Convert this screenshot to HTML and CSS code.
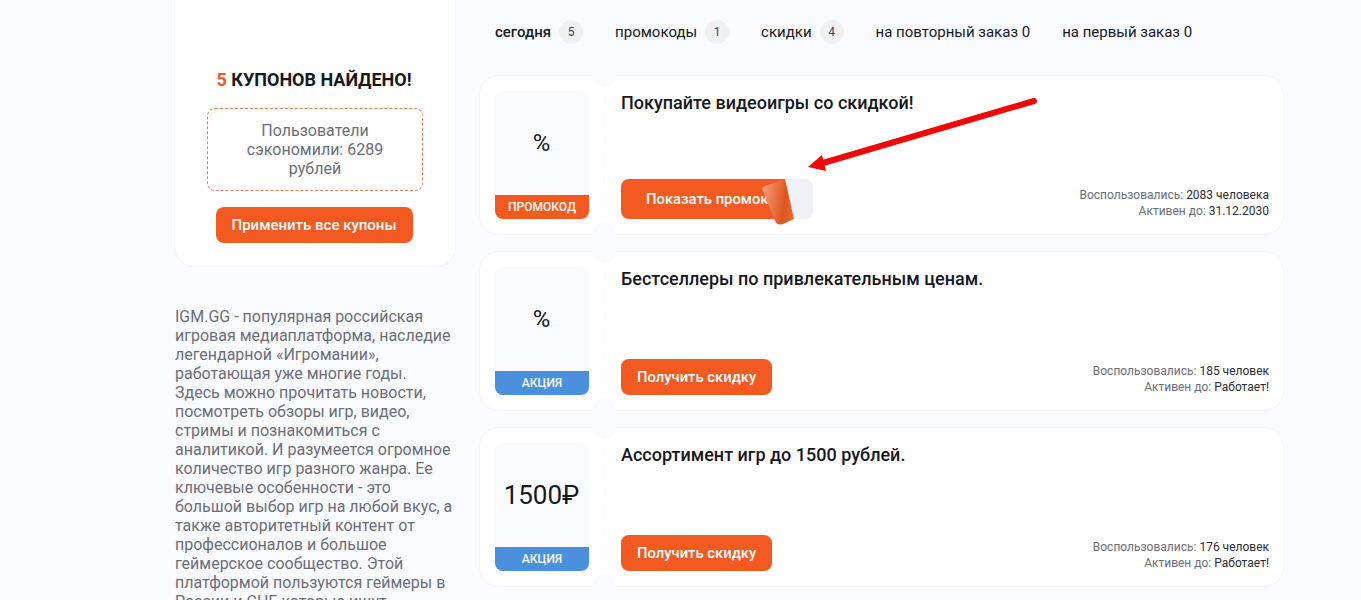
FILE: index.html
```html
<!DOCTYPE html>
<html lang="ru">
<head>
  <meta charset="UTF-8" />
  <title>Промокоды IGM.GG</title>
  <link rel="stylesheet" href="styles.css">
</head>
<body>

<div class="page">
  <aside class="sidebar">
    <div class="summary">
      <h2 class="summary-title"><span>5</span> купонов найдено!</h2>
      <div class="summary-saved">Пользователи сэкономили: 6289 рублей</div>
      <button class="btn btn-apply">Применить все купоны</button>
    </div>
    <p class="about">IGM.GG - популярная российская игровая медиаплатформа, наследие легендарной «Игромании», работающая уже многие годы. Здесь можно прочитать новости, посмотреть обзоры игр, видео, стримы и познакомиться с аналитикой. И разумеется огромное количество игр разного жанра. Ее ключевые особенности - это большой выбор игр на любой вкус, а также авторитетный контент от профессионалов и большое геймерское сообщество. Этой платформой пользуются геймеры в России и СНГ которые ищут актуальную информацию об играх.</p>
  </aside>

  <main class="content">
    <nav class="tabs">
      <a class="tab active">сегодня <span class="count">5</span></a>
      <a class="tab">промокоды <span class="count">1</span></a>
      <a class="tab">скидки <span class="count">4</span></a>
      <a class="tab">на повторный заказ 0</a>
      <a class="tab">на первый заказ 0</a>
    </nav>

    <div class="coupons">
      <div class="coupon">
        <div class="coupon-left">
          <div class="coupon-box">
            <div class="coupon-value">%</div>
            <div class="coupon-label promo">Промокод</div>
          </div>
        </div>
        <div class="coupon-body">
          <h3>Покупайте видеоигры со скидкой!</h3>
          <div class="coupon-bottom">
            <button class="btn-reveal">
              <span class="btn-reveal-face">Показать промокод</span>
              <svg class="peel" width="36" height="50" viewBox="0 0 36 50">
                <defs>
                  <linearGradient id="peelGrad" x1="0" y1="0.4" x2="1" y2="0.6">
                    <stop offset="0" stop-color="#f2a07c"/>
                    <stop offset="0.3" stop-color="#ec7d4e"/>
                    <stop offset="0.7" stop-color="#dd5520"/>
                    <stop offset="1" stop-color="#ea6a30"/>
                  </linearGradient>
                </defs>
                <path d="M2 14 Q0 11 4 9 L24 2 L33 42 L22 47 Q16 49 14 44 Z" fill="url(#peelGrad)"/>
              </svg>
            </button>
            <div class="coupon-meta">
              <div>Воспользовались: <b>2083 человека</b></div>
              <div>Активен до: <b>31.12.2030</b></div>
            </div>
          </div>
        </div>
      </div>

      <div class="coupon">
        <div class="coupon-left">
          <div class="coupon-box">
            <div class="coupon-value">%</div>
            <div class="coupon-label sale">Акция</div>
          </div>
        </div>
        <div class="coupon-body">
          <h3>Бестселлеры по привлекательным ценам.</h3>
          <div class="coupon-bottom">
            <button class="btn">Получить скидку</button>
            <div class="coupon-meta">
              <div>Воспользовались: <b>185 человек</b></div>
              <div>Активен до: <b>Работает!</b></div>
            </div>
          </div>
        </div>
      </div>

      <div class="coupon">
        <div class="coupon-left">
          <div class="coupon-box">
            <div class="coupon-value big">1500₽</div>
            <div class="coupon-label sale">Акция</div>
          </div>
        </div>
        <div class="coupon-body">
          <h3>Ассортимент игр до 1500 рублей.</h3>
          <div class="coupon-bottom">
            <button class="btn">Получить скидку</button>
            <div class="coupon-meta">
              <div>Воспользовались: <b>176 человек</b></div>
              <div>Активен до: <b>Работает!</b></div>
            </div>
          </div>
        </div>
      </div>
    </div>
  </main>
</div>

<!-- arrow drawn over the screenshot -->
<svg class="arrow" width="240" height="80" viewBox="0 0 240 80">
  <path d="M229 4 L18 66" stroke="#f00808" stroke-width="6" stroke-linecap="round" fill="none"/>
  <path d="M3 70 L17 58 L21 74 Z" fill="#f00808"/>
</svg>

</body>
</html>
```

FILE: styles.css
```css
* {
  box-sizing: border-box;
}

html,
body {
  height: 100%;
  overflow: hidden;
}

body {
  margin: 0;
  font-family: Roboto, "Liberation Sans", sans-serif;
  background-color: #fafbfe;
  color: #16181d;
}

.page {
  display: flex;
  gap: 23px;
  padding-left: 174px;
}

.sidebar {
  width: 282px;
  flex-shrink: 0;
}

.summary {
  height: 267px;
  background-color: #fff;
  border: 1px solid #f5f6f9;
  border-top: none;
  border-radius: 0 0 20px 20px;
  padding: 69px 32px 0;
  display: flex;
  flex-direction: column;
  align-items: center;
}

.summary-title {
  margin: 0 2px 17px 0;
  font-size: 18px;
  line-height: 22px;
  font-weight: 700;
  text-transform: uppercase;
  white-space: nowrap;
}

.summary-title span {
  color: #e85c27;
}

.summary-saved {
  width: 216px;
  height: 83px;
  padding: 12px 30px;
  margin-bottom: 16px;
  border: 1px dashed #e3805c;
  border-radius: 8px;
  font-size: 16px;
  line-height: 19.2px;
  text-align: center;
  color: #6b6e76;
}

.btn {
  height: 36px;
  padding: 0 16px;
  border: none;
  border-radius: 8px;
  background-color: #f35a21;
  color: #fff;
  font-family: inherit;
  font-size: 14.8px;
  font-weight: 500;
  white-space: nowrap;
}

.btn-apply {
  margin-right: 2px;
  font-size: 15px;
}

.about {
  margin: 40px 0 0;
  padding: 0 2px 0 1px;
  font-size: 16px;
  line-height: 19px;
  color: #6b6e76;
}

.content {
  width: 805px;
}

.tabs {
  display: flex;
  height: 64px;
  padding-top: 20px;
  margin-bottom: 11px;
}

.tab {
  display: flex;
  align-items: flex-start;
  gap: 8px;
  padding: 0 16px;
  font-size: 15px;
  line-height: 24px;
  color: #16181d;
  white-space: nowrap;
}

.tab.active {
  font-weight: 500;
}

.count {
  width: 24px;
  height: 24px;
  border-radius: 50%;
  background-color: #f0f1f5;
  font-size: 12px;
  font-weight: 400;
  text-align: center;
  color: #40434a;
}

.coupons {
  display: flex;
  flex-direction: column;
  gap: 16px;
}

.coupon {
  position: relative;
  display: flex;
  height: 160px;
  background-color: #fff;
  border: 1px solid #f4f5f9;
  border-radius: 20px;
}

/* notches of the ticket */
.coupon::before,
.coupon::after {
  content: "";
  position: absolute;
  left: 112px;
  width: 24px;
  height: 24px;
  border-radius: 50%;
  background-color: #fafbfe;
}

.coupon::before {
  top: -13px;
}

.coupon::after {
  bottom: -13px;
}

.coupon-left {
  width: 125px;
  padding: 15px;
  border-right: 1px dashed #f6f7fa;
  flex-shrink: 0;
}

.coupon-box {
  height: 128px;
  display: flex;
  flex-direction: column;
  background-color: #fafbfe;
  border-radius: 8px;
  overflow: hidden;
}

.coupon-value {
  flex: 1;
  display: flex;
  align-items: center;
  justify-content: center;
  padding-right: 1px;
  font-size: 24px;
}

.coupon-value.big {
  font-size: 26px;
}

.coupon-label {
  height: 24px;
  font-size: 12px;
  line-height: 24px;
  font-weight: 500;
  text-align: center;
  text-transform: uppercase;
  color: #fff;
}

.coupon-label.promo {
  background-color: #f35a21;
}

.coupon-label.sale {
  background-color: #4a90dc;
}

.coupon-body {
  flex: 1;
  display: flex;
  flex-direction: column;
  justify-content: space-between;
  padding: 15px 14px 15px 16px;
}

.coupon-body h3 {
  margin: 0;
  font-size: 18px;
  line-height: 24px;
  font-weight: 500;
}

.coupon-bottom {
  display: flex;
  align-items: flex-end;
  justify-content: space-between;
}

.coupon-meta {
  font-size: 12px;
  line-height: 16px;
  text-align: right;
  color: #6b6e76;
}

.coupon-meta b {
  font-weight: 400;
  color: #2b2d33;
}

.btn-reveal {
  position: relative;
  width: 192px;
  height: 40px;
  padding: 0;
  border: none;
  border-radius: 8px;
  background-color: #f0f1f7;
  font-family: inherit;
}

.btn-reveal-face {
  display: block;
  width: 164px;
  height: 40px;
  padding-left: 25px;
  border-radius: 8px 0 0 8px;
  background-color: #f35a21;
  color: #fff;
  font-size: 14.8px;
  font-weight: 500;
  line-height: 40px;
  text-align: left;
  white-space: nowrap;
}

.peel {
  position: absolute;
  left: 140px;
  top: -2px;
}

.arrow {
  position: absolute;
  left: 805px;
  top: 97px;
}
```
